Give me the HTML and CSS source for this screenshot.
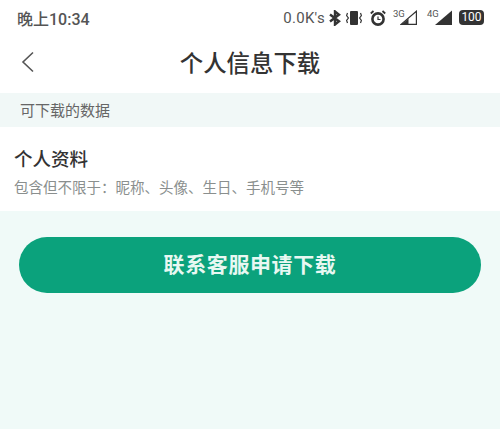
FILE: index.html
```html
<!DOCTYPE html>
<html>
<head>
    <meta charset="utf-8">
    <title>个人信息下载</title>
    <link rel="stylesheet" href="styles.css">
</head>
<body>
    <div class="status-bar">
        <span class="time">晚上10:34</span>
        <div class="status-icons">
            <span class="speed">0.0K's</span>
            <svg class="icon bluetooth" width="12" height="16" viewBox="0 0 12 16">
                <path d="M1 4.5 L10 11.2 L6 14.5 V1.5 L10 4.8 L1 11.5" fill="none" stroke="#333" stroke-width="2.4"/>
            </svg>
            <svg class="icon vibrate" width="16" height="16" viewBox="0 0 16 16">
                <rect x="4" y="1" width="8" height="14" rx="1" fill="#333"/>
                <path d="M1.5 3 L0.6 5.5 L2.4 8 L0.6 10.5 L1.5 13 M14.5 3 L15.4 5.5 L13.6 8 L15.4 10.5 L14.5 13" fill="none" stroke="#333" stroke-width="1.2"/>
            </svg>
            <svg class="icon alarm" width="16" height="16" viewBox="0 0 16 16">
                <circle cx="8" cy="9" r="5.6" fill="none" stroke="#333" stroke-width="2.6"/>
                <path d="M8 6.5 V9.5 H10.5" fill="none" stroke="#333" stroke-width="1.2"/>
                <path d="M0.8 3.5 L3.5 1 M15.2 3.5 L12.5 1" stroke="#333" stroke-width="1.8"/>
            </svg>
            <div class="signal">
                <span class="net">3G</span>
                <svg width="17" height="15" viewBox="0 0 17 15">
                    <path d="M1 14.4 L16.4 1.2 V14.4 Z" fill="none" stroke="#333" stroke-width="1.2"/>
                    <path d="M1 15 L8.5 8.5 V15 Z" fill="#333"/>
                </svg>
            </div>
            <div class="signal second">
                <span class="net">4G</span>
                <svg width="17" height="15" viewBox="0 0 17 15">
                    <path d="M0 15 L17 0.5 V15 Z" fill="#333"/>
                </svg>
            </div>
            <div class="battery">100</div>
        </div>
    </div>

    <div class="title-bar">
        <svg class="back" width="14" height="22" viewBox="0 0 14 22">
            <path d="M12 1.5 L2 11 L12 20.5" fill="none" stroke="#555" stroke-width="1.6"/>
        </svg>
        <h1>个人信息下载</h1>
    </div>

    <div class="section-label">可下载的数据</div>

    <div class="card">
        <div class="card-title">个人资料</div>
        <div class="card-desc">包含但不限于：昵称、头像、生日、手机号等</div>
    </div>

    <div class="action">
        <div class="button">联系客服申请下载</div>
    </div>
</body>
</html>
```

FILE: styles.css
```css
* {
    box-sizing: border-box;
}
html, body {
    height: 100%;
}
body {
    margin: 0;
    background-color: #f0faf8;
    font-family: "Liberation Sans", "Noto Sans CJK SC", sans-serif;
    overflow: hidden;
}
.status-bar {
    display: flex;
    justify-content: space-between;
    align-items: center;
    height: 36px;
    padding: 0 16px 1px 17px;
    background-color: #fff;
    color: #555;
}
.time {
    font-size: 16px;
    font-family: "Roboto", "Noto Sans CJK SC", sans-serif;
    font-weight: 500;
}
.status-icons {
    display: flex;
    align-items: center;
    gap: 7px;
}
.speed {
    font-size: 15px;
    font-family: "Roboto", sans-serif;
    letter-spacing: 0.3px;
}
.icon {
    display: block;
}
.bluetooth {
    margin-left: -3px;
    margin-right: -2px;
}
.alarm {
    margin-left: 1px;
}
.signal {
    display: flex;
    align-items: flex-start;
    width: 24px;
}
.signal.second {
    width: 25px;
    margin-left: 3px;
}
.net {
    width: 7px;
    font-size: 9.5px;
    line-height: 8px;
    font-family: "Roboto", sans-serif;
    white-space: nowrap;
}
.signal svg {
    margin-left: auto;
}
.battery {
    width: 25px;
    height: 15px;
    border-radius: 4px;
    background-color: #333;
    color: #fff;
    font-size: 12px;
    line-height: 15px;
    text-align: center;
    font-family: "Roboto", sans-serif;
}
.title-bar {
    display: flex;
    align-items: center;
    justify-content: center;
    position: relative;
    height: 57px;
    padding-bottom: 5px;
    background-color: #fff;
}
.title-bar h1 {
    margin: 0;
    font-size: 23.4px;
    font-weight: 500;
    color: #333;
}
.back {
    position: absolute;
    left: 21px;
    top: 15px;
}
.section-label {
    height: 34px;
    padding-left: 20px;
    font-size: 15px;
    line-height: 35px;
    color: #666;
    background-color: #f1f8f7;
}
.card {
    height: 84px;
    padding: 22px 14px 0;
    background-color: #fff;
}
.card-title {
    font-size: 18.5px;
    line-height: 22px;
    font-weight: 500;
    color: #333;
}
.card-desc {
    margin-top: 8px;
    font-size: 14.5px;
    line-height: 18px;
    color: #8a8f8e;
}
.action {
    padding: 26px 19px 0;
}
.button {
    height: 56px;
    border-radius: 28px;
    background-color: #0ba27c;
    color: #e8f8f2;
    font-size: 21px;
    font-weight: 700;
    line-height: 56px;
    text-align: center;
    letter-spacing: 0.6px;
}
```
